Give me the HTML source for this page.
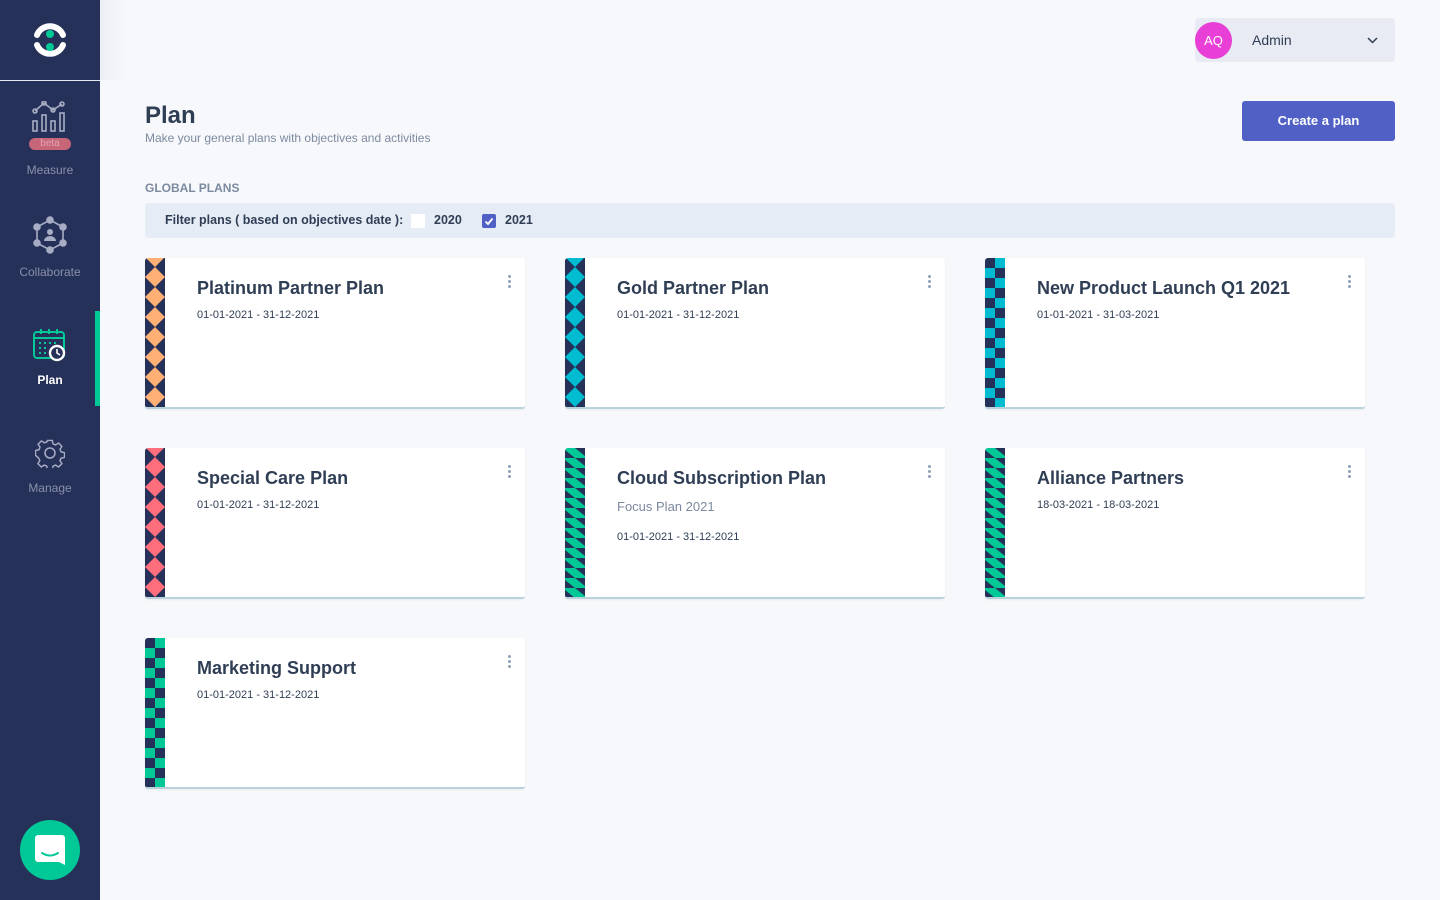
<!DOCTYPE html>
<html><head><meta charset="utf-8"><style>
*{margin:0;padding:0;box-sizing:border-box}
body{width:1440px;height:900px;background:#f7f8fb;font-family:"Liberation Sans",sans-serif;position:relative;overflow:hidden;color:#2f3e55}
.side{position:absolute;left:0;top:0;width:100px;height:900px;background:#263159}
.logo{height:81px;border-bottom:1px solid #e6e8f0;display:flex;align-items:center;justify-content:center}
.nav{position:absolute;left:0;width:100px;text-align:center;font-size:12px;color:#8a90ab}
.nav.active{color:#fff;font-weight:bold}
.bar{position:absolute;left:95px;top:311px;width:5px;height:95px;background:#00c896}
.chat{position:absolute;left:20px;top:820px;width:60px;height:60px;border-radius:50%;background:#00c896;display:flex;align-items:center;justify-content:center}
.user{position:absolute;left:1195px;top:18px;width:200px;height:44px;background:#e8eaf4;border-radius:4px}
.av{position:absolute;left:0;top:4px;width:37px;height:37px;border-radius:50%;background:#e83fd7;color:#fff;font-size:13px;text-align:center;line-height:37px}
.btn{position:absolute;left:1242px;top:101px;width:153px;height:40px;background:#5060c4;border-radius:3px;color:#fff;font-size:13px;font-weight:bold;text-align:center;line-height:40px}
h1{position:absolute;left:145px;top:102px;font-size:24px;font-weight:bold;color:#2f3e55}
.sub{position:absolute;left:145px;top:131px;font-size:12px;color:#7c8aa0}
.gp{position:absolute;left:145px;top:181px;font-size:12px;font-weight:bold;color:#7c8aa0}
.filter{position:absolute;left:145px;top:203px;width:1250px;height:35px;background:#e6ecf6;border-radius:3px;font-size:12.5px;font-weight:bold;color:#2f3e55}
.card{position:absolute;width:380px;height:151px;background:#fff;border-radius:3px;border-bottom:2px solid #b9d3dc;box-shadow:0 1px 2px rgba(0,0,0,.06);overflow:hidden}
.card svg.s{position:absolute;left:0;top:0}
.card .t{position:absolute;left:52px;top:20px;font-size:18px;font-weight:bold;color:#2f3e55}
.card .d{position:absolute;left:52px;top:51px;font-size:11px;color:#2f3e55}
.card .f{position:absolute;left:52px;top:51px;font-size:13px;color:#7c8aa0}
.dots{position:absolute;right:14px;top:17px;width:3px}
.dots i{display:block;width:3px;height:3px;border-radius:50%;background:#8ea0b8;margin-bottom:2px}
</style></head><body>
<svg width="0" height="0" style="position:absolute"><defs>
<pattern id="dOr" width="20" height="20" patternUnits="userSpaceOnUse" y="9"><rect width="20" height="20" fill="#263159"/><polygon points="10,0 20,10 10,20 0,10" fill="#ffb074"/></pattern>
<pattern id="dCy" width="20" height="20" patternUnits="userSpaceOnUse" y="9"><rect width="20" height="20" fill="#263159"/><polygon points="10,0 20,10 10,20 0,10" fill="#00bcd0"/></pattern>
<pattern id="dPk" width="20" height="20" patternUnits="userSpaceOnUse" y="9"><rect width="20" height="20" fill="#263159"/><polygon points="10,0 20,10 10,20 0,10" fill="#ff6f7b"/></pattern>
<pattern id="cCy" width="20" height="20" patternUnits="userSpaceOnUse"><rect width="20" height="20" fill="#00bcd0"/><rect width="10" height="10" fill="#263159"/><rect x="10" y="10" width="10" height="10" fill="#263159"/></pattern>
<pattern id="cGr" width="20" height="20" patternUnits="userSpaceOnUse"><rect width="20" height="20" fill="#00c896"/><rect width="10" height="10" fill="#263159"/><rect x="10" y="10" width="10" height="10" fill="#263159"/></pattern>
<pattern id="tGr" width="20" height="10" patternUnits="userSpaceOnUse"><rect width="20" height="10" fill="#263159"/><polygon points="0,0 10,0 20,8 20,10 10,10 0,2" fill="#00c896"/></pattern>
</defs></svg>

<div class="side">
<div class="logo"><svg width="34" height="36" viewBox="0 0 34 36"><path d="M4 13 A14 14 0 0 1 30 13" stroke="#fff" stroke-width="6" fill="none" stroke-linecap="round"/><path d="M4 23 A14 14 0 0 0 30 23" stroke="#fff" stroke-width="6" fill="none" stroke-linecap="round"/><circle cx="17" cy="12" r="4" fill="#00c896"/><circle cx="17" cy="25" r="4" fill="#00c896"/></svg></div>
<div class="nav" style="top:101px"><svg width="40" height="34" viewBox="0 0 40 34" fill="none" stroke="#a7adc4" stroke-width="1.6"><rect x="3" y="20" width="4" height="10"/><rect x="12" y="14" width="4" height="16"/><rect x="21" y="20" width="4" height="10"/><rect x="30" y="12" width="4" height="18"/><polyline points="5,10 14,2 23,9 32,3"/><circle cx="5" cy="10" r="2"/><circle cx="14" cy="2" r="2"/><circle cx="23" cy="9" r="2"/><circle cx="32" cy="3" r="2"/></svg>
<div style="width:42px;height:12px;margin:0 auto 0;background:#c76579;border-radius:6px;font-size:10px;color:#e7a4b2;line-height:12px">beta</div>
<div style="margin-top:13px">Measure</div></div>
<div class="nav" style="top:216px"><svg width="36" height="38" viewBox="0 0 36 38" fill="none" stroke="#a7adc4" stroke-width="1.6"><polygon points="18,4 31,11 31,27 18,34 5,27 5,11"/><g fill="#a7adc4"><circle cx="18" cy="4" r="3"/><circle cx="31" cy="11" r="3"/><circle cx="31" cy="27" r="3"/><circle cx="18" cy="34" r="3"/><circle cx="5" cy="27" r="3"/><circle cx="5" cy="11" r="3"/><circle cx="18" cy="16" r="3" stroke="none"/><path d="M12 25 a6 5 0 0 1 12 0z" stroke="none"/></g></svg>
<div style="margin-top:8px">Collaborate</div></div>
<div class="nav" style="top:328px" class="nav active"></div>
<div class="nav active" style="top:328px"><svg width="36" height="36" viewBox="0 0 36 36" fill="none" stroke="#00c896" stroke-width="2"><rect x="2" y="4" width="30" height="26" rx="3"/><line x1="2" y1="10" x2="32" y2="10"/><line x1="9" y1="1" x2="9" y2="6"/><line x1="17" y1="1" x2="17" y2="6"/><line x1="25" y1="1" x2="25" y2="6"/><g fill="#00c896" stroke="none"><rect x="7" y="14" width="2" height="2"/><rect x="12" y="14" width="2" height="2"/><rect x="17" y="14" width="2" height="2"/><rect x="22" y="14" width="2" height="2"/><rect x="7" y="19" width="2" height="2"/><rect x="12" y="19" width="2" height="2"/><rect x="7" y="24" width="2" height="2"/><rect x="12" y="24" width="2" height="2"/></g><circle cx="25" cy="25" r="7" fill="#263159" stroke="#fff" stroke-width="2.4"/><polyline points="25,21 25,25 28,27" stroke="#fff" stroke-width="1.6"/></svg>
<div style="margin-top:6px">Plan</div></div>
<div class="bar"></div>
<div class="nav" style="top:438px"><svg width="30" height="30" viewBox="0 0 30 30" fill="none" stroke="#a7adc4" stroke-width="1.5"><path d="M12.5 2h5l.8 3.6 2.6 1.1 3.1-2 3.5 3.5-2 3.1 1.1 2.6 3.6.8v5l-3.6.8-1.1 2.6 2 3.1-3.5 3.5-3.1-2-2.6 1.1-.8 3.6h-5l-.8-3.6-2.6-1.1-3.1 2-3.5-3.5 2-3.1-1.1-2.6L0 17.5v-5l3.6-.8 1.1-2.6-2-3.1 3.5-3.5 3.1 2 2.6-1.1z" transform="translate(0.5 0.5) scale(.96)"/><circle cx="15" cy="15" r="5"/></svg>
<div style="margin-top:10px">Manage</div></div>
<div class="chat"><svg width="30" height="30" viewBox="0 0 30 30"><path d="M3 0h24a3 3 0 0 1 3 3v27l-6-3H3a3 3 0 0 1-3-3V3a3 3 0 0 1 3-3z" fill="#fff"/><path d="M7 18q8 5 16 0" stroke="#00c896" stroke-width="2" fill="none" stroke-linecap="round"/></svg></div>
</div>
<div style="position:absolute;left:100px;top:0;width:30px;height:80px;background:linear-gradient(90deg,#eceff5,#f7f8fb)"></div>

<div class="user"><div class="av">AQ</div><div style="position:absolute;left:57px;top:14px;font-size:14px;color:#2f3e55">Admin</div><svg style="position:absolute;left:172px;top:19px" width="11" height="7" viewBox="0 0 11 7"><polyline points="1,1 5.5,5.5 10,1" stroke="#2f3e55" stroke-width="1.5" fill="none"/></svg></div>
<h1>Plan</h1>
<div class="sub">Make your general plans with objectives and activities</div>
<div class="btn">Create a plan</div>
<div class="gp">GLOBAL PLANS</div>
<div class="filter"><span style="position:absolute;left:20px;top:10px">Filter plans ( based on objectives date ):</span>
<span style="position:absolute;left:266px;top:11px;width:14px;height:14px;background:#fff"></span><span style="position:absolute;left:289px;top:10px">2020</span>
<span style="position:absolute;left:337px;top:11px;width:14px;height:14px;background:#5060c4;border-radius:2px"><svg width="14" height="14"><polyline points="3.5,7.5 6,10 10.5,4.5" stroke="#fff" stroke-width="1.8" fill="none"/></svg></span><span style="position:absolute;left:360px;top:10px">2021</span></div>

<div class="card" style="left:145px;top:258px"><svg class="s" width="20" height="150"><rect width="20" height="150" fill="url(#dOr)"/></svg><div class="t">Platinum Partner Plan</div><div class="d">01-01-2021 - 31-12-2021</div><div class="dots"><i></i><i></i><i></i></div></div>
<div class="card" style="left:565px;top:258px"><svg class="s" width="20" height="150"><rect width="20" height="150" fill="url(#dCy)"/></svg><div class="t">Gold Partner Plan</div><div class="d">01-01-2021 - 31-12-2021</div><div class="dots"><i></i><i></i><i></i></div></div>
<div class="card" style="left:985px;top:258px"><svg class="s" width="20" height="150"><rect width="20" height="150" fill="url(#cCy)"/></svg><div class="t">New Product Launch Q1 2021</div><div class="d">01-01-2021 - 31-03-2021</div><div class="dots"><i></i><i></i><i></i></div></div>
<div class="card" style="left:145px;top:448px"><svg class="s" width="20" height="150"><rect width="20" height="150" fill="url(#dPk)"/></svg><div class="t">Special Care Plan</div><div class="d">01-01-2021 - 31-12-2021</div><div class="dots"><i></i><i></i><i></i></div></div>
<div class="card" style="left:565px;top:448px"><svg class="s" width="20" height="150"><rect width="20" height="150" fill="url(#tGr)"/></svg><div class="t">Cloud Subscription Plan</div><div class="f">Focus Plan 2021</div><div class="d" style="top:83px">01-01-2021 - 31-12-2021</div><div class="dots"><i></i><i></i><i></i></div></div>
<div class="card" style="left:985px;top:448px"><svg class="s" width="20" height="150"><rect width="20" height="150" fill="url(#tGr)"/></svg><div class="t">Alliance Partners</div><div class="d">18-03-2021 - 18-03-2021</div><div class="dots"><i></i><i></i><i></i></div></div>
<div class="card" style="left:145px;top:638px"><svg class="s" width="20" height="150"><rect width="20" height="150" fill="url(#cGr)"/></svg><div class="t">Marketing Support</div><div class="d">01-01-2021 - 31-12-2021</div><div class="dots"><i></i><i></i><i></i></div></div>
</body></html>
